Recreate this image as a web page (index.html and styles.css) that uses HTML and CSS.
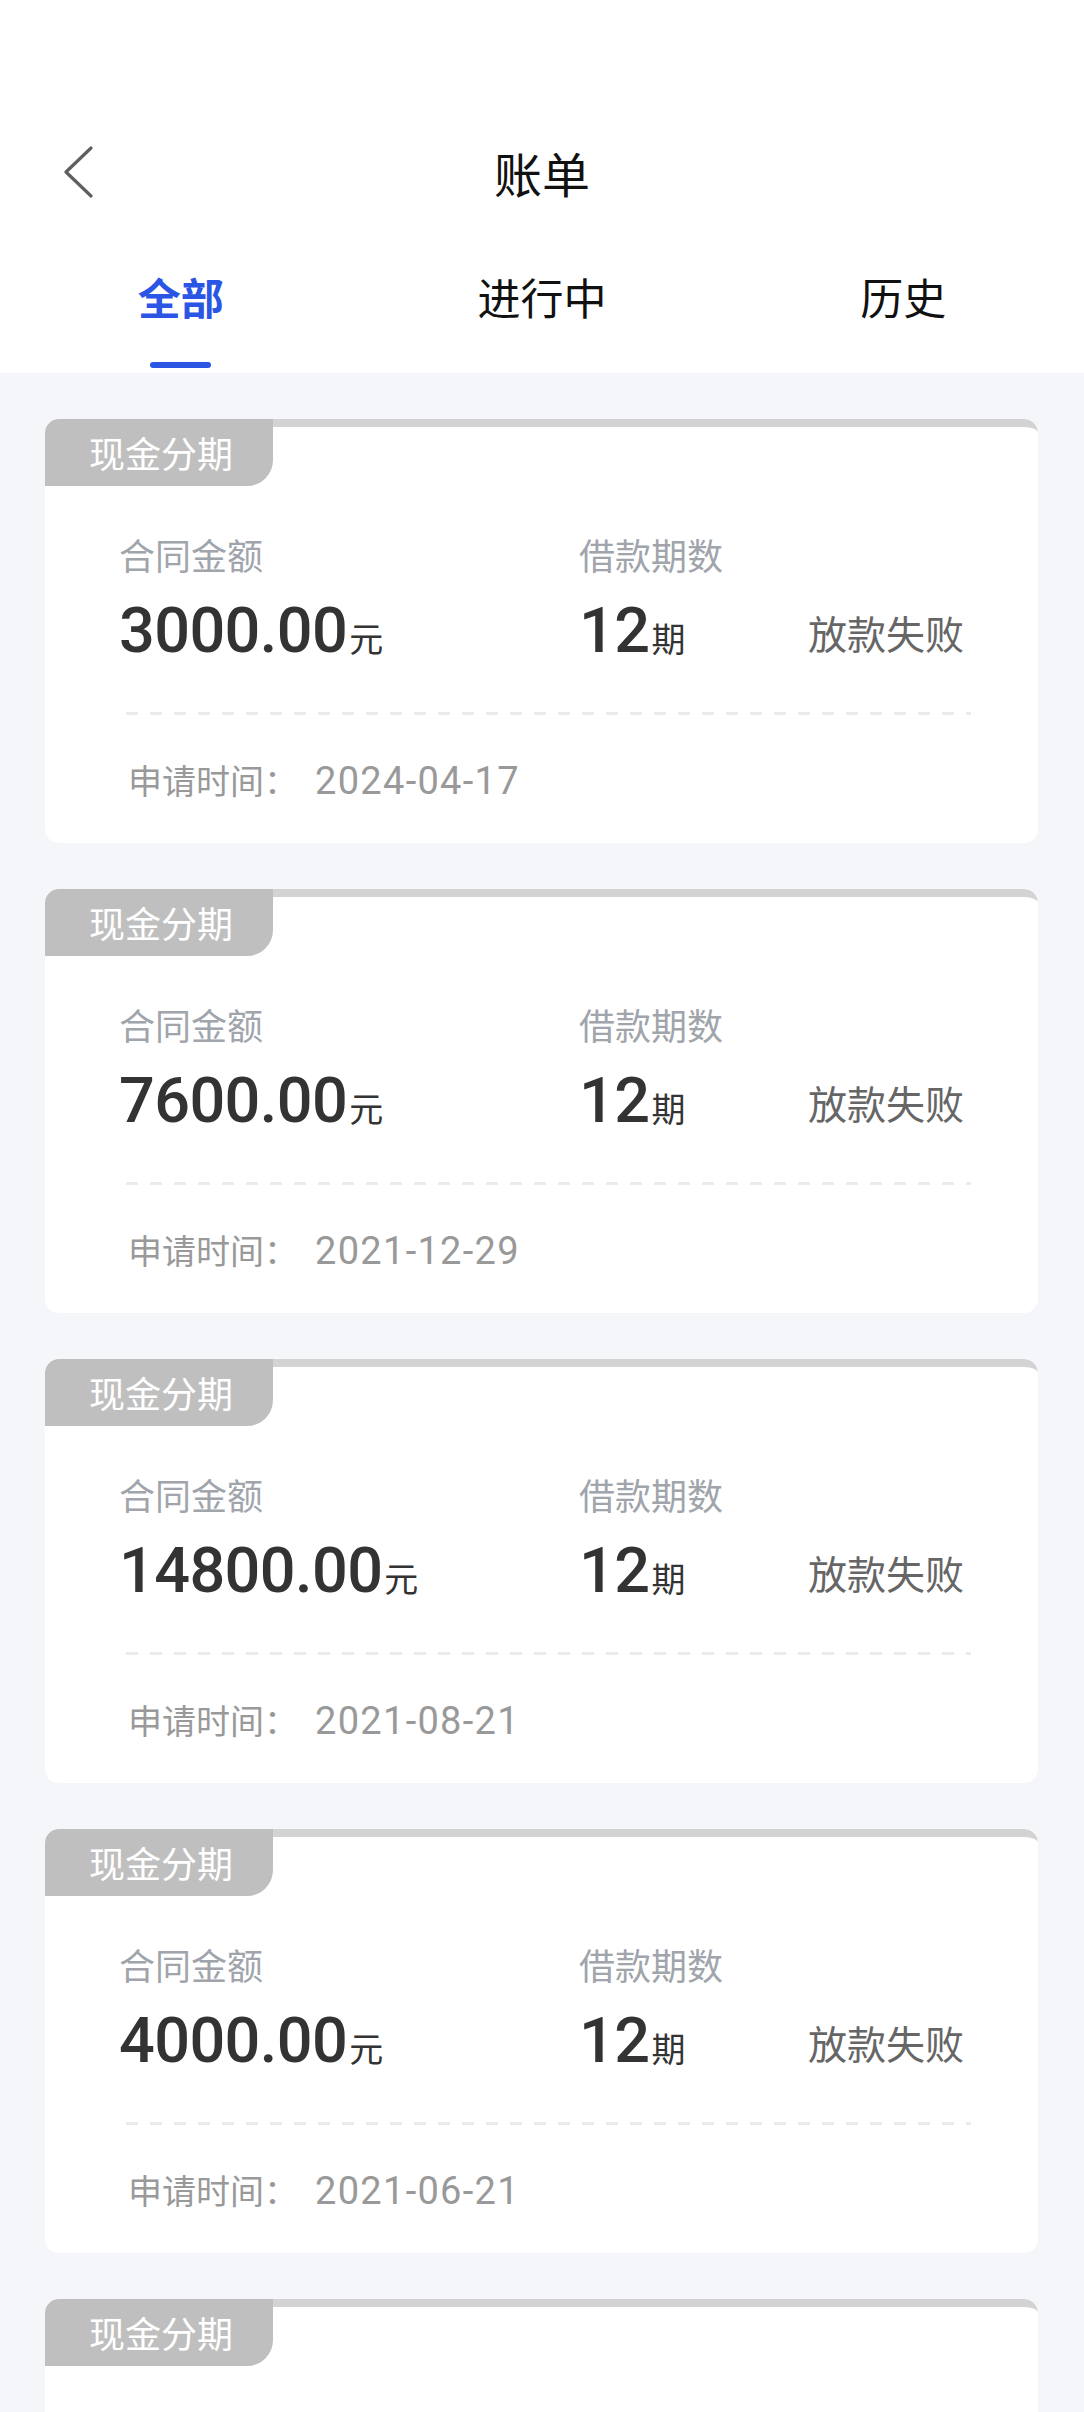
FILE: index.html
```html
<!DOCTYPE html>
<html lang="zh-CN">
<head>
<meta charset="utf-8">
<title>账单</title>
<link rel="stylesheet" href="styles.css">
</head>
<body>
<div class="page">
  <header class="header">
    <div class="status-space"></div>
    <div class="nav">
      <button class="back" aria-label="返回">
        <svg width="30" height="52" viewBox="0 0 30 52"><path d="M28 2 L3 26 L28 50" fill="none" stroke="#5f5f5f" stroke-width="3.2" stroke-linecap="round" stroke-linejoin="round"/></svg>
      </button>
      <h1 class="title">账单</h1>
    </div>
    <nav class="tabs">
      <div class="tab active"><span class="tab-text">全部</span><i class="tab-bar"></i></div>
      <div class="tab"><span class="tab-text">进行中</span><i class="tab-bar"></i></div>
      <div class="tab"><span class="tab-text">历史</span><i class="tab-bar"></i></div>
    </nav>
  </header>

  <main class="list">
    <section class="card">
      <div class="card-top"><span class="tag">现金分期</span></div>
      <div class="stats">
        <div class="col col-amount"><div class="label">合同金额</div><div class="value"><span class="num">3000.00</span><span class="unit">元</span></div></div>
        <div class="col col-term"><div class="label">借款期数</div><div class="value"><span class="num">12</span><span class="unit">期</span></div></div>
        <div class="state">放款失败</div>
      </div>
      <div class="dash"></div>
      <div class="meta"><span class="meta-label">申请时间：</span><span class="meta-date">2024-04-17</span></div>
    </section>

    <section class="card">
      <div class="card-top"><span class="tag">现金分期</span></div>
      <div class="stats">
        <div class="col col-amount"><div class="label">合同金额</div><div class="value"><span class="num">7600.00</span><span class="unit">元</span></div></div>
        <div class="col col-term"><div class="label">借款期数</div><div class="value"><span class="num">12</span><span class="unit">期</span></div></div>
        <div class="state">放款失败</div>
      </div>
      <div class="dash"></div>
      <div class="meta"><span class="meta-label">申请时间：</span><span class="meta-date">2021-12-29</span></div>
    </section>

    <section class="card">
      <div class="card-top"><span class="tag">现金分期</span></div>
      <div class="stats">
        <div class="col col-amount"><div class="label">合同金额</div><div class="value"><span class="num">14800.00</span><span class="unit">元</span></div></div>
        <div class="col col-term"><div class="label">借款期数</div><div class="value"><span class="num">12</span><span class="unit">期</span></div></div>
        <div class="state">放款失败</div>
      </div>
      <div class="dash"></div>
      <div class="meta"><span class="meta-label">申请时间：</span><span class="meta-date">2021-08-21</span></div>
    </section>

    <section class="card">
      <div class="card-top"><span class="tag">现金分期</span></div>
      <div class="stats">
        <div class="col col-amount"><div class="label">合同金额</div><div class="value"><span class="num">4000.00</span><span class="unit">元</span></div></div>
        <div class="col col-term"><div class="label">借款期数</div><div class="value"><span class="num">12</span><span class="unit">期</span></div></div>
        <div class="state">放款失败</div>
      </div>
      <div class="dash"></div>
      <div class="meta"><span class="meta-label">申请时间：</span><span class="meta-date">2021-06-21</span></div>
    </section>

    <section class="card card-peek">
      <div class="card-top"><span class="tag">现金分期</span></div>
    </section>
  </main>
</div>
</body>
</html>
```
FILE: styles.css
```css
* {
  box-sizing: border-box;
}

html,
body {
  margin: 0;
  padding: 0;
  background: #f5f6fa;
}

body {
  font-family: "Noto Sans CJK SC", "Noto Sans", sans-serif;
  color: #333;
}

.page {
  width: 1084px;
  height: 2412px;
  overflow: hidden;
}

/* header: blank status area, nav row, tabs */
.header {
  background: #fff;
}

.status-space {
  height: 100px;
}

.nav {
  position: relative;
  height: 144px;
  display: flex;
  align-items: center;
  justify-content: center;
}

.back {
  position: absolute;
  left: 63px;
  top: 46px;
  width: 30px;
  height: 52px;
  padding: 0;
  border: 0;
  background: none;
  display: flex;
}

.title {
  margin: 0;
  font-size: 48px;
  line-height: 48px;
  font-weight: 400;
  color: #111;
}

.tabs {
  display: grid;
  grid-template-columns: repeat(3, 1fr);
  padding-top: 30px;
  padding-bottom: 5px;
}

.tab {
  display: flex;
  flex-direction: column;
  align-items: center;
}

.tab-text {
  font-size: 43px;
  line-height: 44px;
  color: #111;
}

.tab-bar {
  display: block;
  width: 61px;
  height: 6px;
  margin-top: 44px;
  border-radius: 3px;
  background: transparent;
}

.tab.active .tab-text {
  color: #2a55e5;
  font-weight: 700;
}

.tab.active .tab-bar {
  background: #2a55e5;
}

/* bill cards */
.list {
  display: flex;
  flex-direction: column;
  gap: 46px;
  padding: 46px 46px 0 45px;
}

.card {
  background: #fff;
  border-radius: 14px;
  overflow: hidden;
  padding-bottom: 46px;
}

.card-peek {
  min-height: 200px;
}

.card-top {
  height: 67px;
  border-top: 8px solid #d3d3d3;
  border-radius: 14px 14px 0 0;
  position: relative;
}

.tag {
  position: absolute;
  left: 0;
  top: -8px;
  width: 228px;
  height: 67px;
  background: #bfbfbf;
  border-radius: 14px 0 26px 0;
  color: #fff;
  font-size: 36px;
  font-weight: 400;
  line-height: 67px;
  text-align: center;
  padding-left: 4px;
}

.stats {
  display: flex;
  align-items: flex-end;
  margin-top: 50px;
  padding: 0 74px 0 74px;
}

.col {
  display: flex;
  flex-direction: column;
}

.col-amount {
  width: 460px;
}

.col-term {
  flex: 1;
}

.label {
  font-size: 36px;
  line-height: 36px;
  color: #a0a4ab;
}

.value {
  display: flex;
  align-items: baseline;
  height: 64px;
  margin-top: 27px;
  white-space: nowrap;
  color: #333;
}

.num {
  font-family: "Roboto", "Noto Sans", sans-serif;
  font-weight: 500;
  font-size: 63px;
  line-height: 64px;
  letter-spacing: -0.6px;
}

.unit {
  font-size: 34px;
  line-height: 34px;
  font-weight: 400;
  margin-left: 2px;
}

.state {
  font-size: 39px;
  line-height: 38px;
  color: #666;
  margin-bottom: 12px;
}

.dash {
  height: 3px;
  margin: 49px 67px 0 81px;
  background: repeating-linear-gradient(90deg, #ebebeb 0 12px, transparent 12px 24px);
}

.meta {
  display: flex;
  align-items: baseline;
  height: 34px;
  margin-top: 48px;
  padding-left: 83px;
  color: #999;
}

.meta-label {
  font-size: 34px;
  line-height: 34px;
}

.meta-date {
  margin-left: 17px;
  font-family: "Roboto", "Noto Sans", sans-serif;
  font-size: 38px;
  line-height: 34px;
  letter-spacing: 1.3px;
  color: #999;
}
```
